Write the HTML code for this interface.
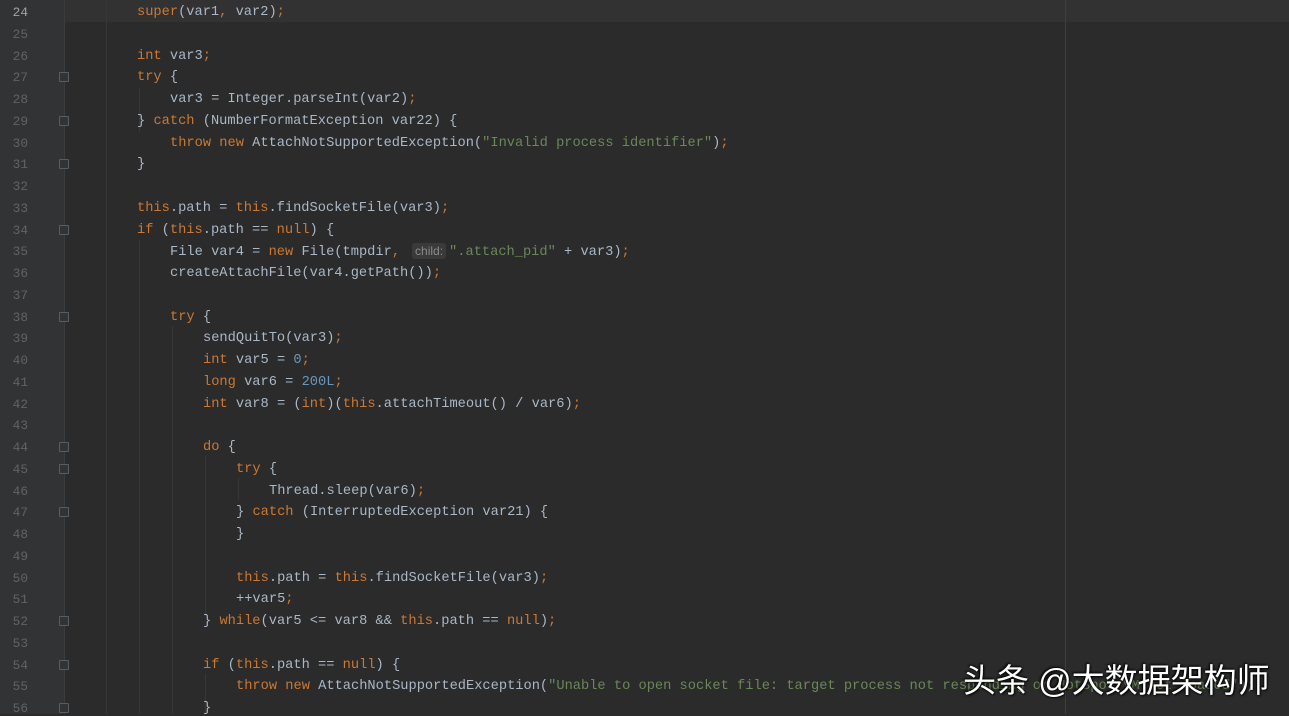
<!DOCTYPE html>
<html><head><meta charset="utf-8"><style>
body{margin:0;width:1289px;height:714px;overflow:hidden;background:#2b2b2b;position:relative;font-family:"Liberation Mono",monospace;font-size:13.7px}
.g{position:absolute;left:0;top:0;width:65px;height:714px;background:#313335}
.gl{position:absolute;left:64px;top:0;width:1px;height:714px;background:#3a3d3f}
.ln{position:absolute;left:0;width:28px;text-align:right;color:#606366;font-size:12.8px;margin-top:2px}
.c{position:absolute;white-space:pre;color:#a9b7c6;margin-top:2px}
.k{color:#cc7832}.s{color:#6a8759}.n{color:#6897bb}
.hl{position:absolute;left:65px;top:0;width:1224px;height:22px;background:#323232}
.ig{position:absolute;width:1px;background:#373737}
.rm{position:absolute;left:1065px;top:0;width:1px;height:714px;background:#3e3e3e}
.f{position:absolute;left:59px;width:8px;height:8px;border:1px solid #5a5d5f;border-radius:1px;background:#313335}
.hint{background:#3a3a3a;color:#8a8a8a;border-radius:3px;font-family:"Liberation Sans",sans-serif;font-size:12px;padding:1px 3px;margin-left:12px;margin-right:3px}
.wm{position:absolute;left:963px;top:654px;color:#fff;font-family:"Liberation Sans","Noto Sans CJK SC",sans-serif;font-size:33px;text-shadow:1px 1px 2px #000,-1px -1px 2px #000}
</style></head><body>
<div class="g"></div><div class="hl"></div><div class="gl"></div>
<div class="ig" style="left:106px;top:0;height:714px"></div>
<div class="ig" style="left:139px;top:88px;height:44px"></div>
<div class="ig" style="left:139px;top:240px;height:474px"></div>
<div class="ig" style="left:172px;top:326px;height:388px"></div>
<div class="ig" style="left:205px;top:456px;height:160px"></div>
<div class="ig" style="left:238px;top:478px;height:22px"></div>
<div class="ig" style="left:205px;top:674px;height:40px"></div>
<div class="rm"></div>
<div class="ln" style="top:3px;color:#a4a3a3">24</div>
<div class="ln" style="top:25px">25</div><div class="ln" style="top:47px">26</div><div class="ln" style="top:68px">27</div><div class="ln" style="top:90px">28</div><div class="ln" style="top:112px">29</div><div class="ln" style="top:134px">30</div><div class="ln" style="top:155px">31</div><div class="ln" style="top:177px">32</div><div class="ln" style="top:199px">33</div><div class="ln" style="top:221px">34</div><div class="ln" style="top:242px">35</div><div class="ln" style="top:264px">36</div><div class="ln" style="top:286px">37</div><div class="ln" style="top:308px">38</div><div class="ln" style="top:329px">39</div><div class="ln" style="top:351px">40</div><div class="ln" style="top:373px">41</div><div class="ln" style="top:395px">42</div><div class="ln" style="top:416px">43</div><div class="ln" style="top:438px">44</div><div class="ln" style="top:460px">45</div><div class="ln" style="top:482px">46</div><div class="ln" style="top:503px">47</div><div class="ln" style="top:525px">48</div><div class="ln" style="top:547px">49</div><div class="ln" style="top:569px">50</div><div class="ln" style="top:590px">51</div><div class="ln" style="top:612px">52</div><div class="ln" style="top:634px">53</div><div class="ln" style="top:656px">54</div><div class="ln" style="top:677px">55</div><div class="ln" style="top:699px">56</div>
<div class="f" style="top:72px"></div><div class="f" style="top:116px"></div><div class="f" style="top:159px"></div><div class="f" style="top:225px"></div><div class="f" style="top:312px"></div><div class="f" style="top:442px"></div><div class="f" style="top:464px"></div><div class="f" style="top:507px"></div><div class="f" style="top:616px"></div><div class="f" style="top:660px"></div><div class="f" style="top:703px"></div>
<div class="c" style="left:137px;top:3px"><span class="k">super</span>(var1<span class="k">,</span> var2)<span class="k">;</span></div>
<div class="c" style="left:137px;top:47px"><span class="k">int</span> var3<span class="k">;</span></div>
<div class="c" style="left:137px;top:68px"><span class="k">try</span> {</div>
<div class="c" style="left:170px;top:90px">var3 = Integer.parseInt(var2)<span class="k">;</span></div>
<div class="c" style="left:137px;top:112px">} <span class="k">catch</span> (NumberFormatException var22) {</div>
<div class="c" style="left:170px;top:134px"><span class="k">throw new</span> AttachNotSupportedException(<span class="s">"Invalid process identifier"</span>)<span class="k">;</span></div>
<div class="c" style="left:137px;top:155px">}</div>
<div class="c" style="left:137px;top:199px"><span class="k">this</span>.path = <span class="k">this</span>.findSocketFile(var3)<span class="k">;</span></div>
<div class="c" style="left:137px;top:221px"><span class="k">if</span> (<span class="k">this</span>.path == <span class="k">null</span>) {</div>
<div class="c" style="left:170px;top:242px">File var4 = <span class="k">new</span> File(tmpdir<span class="k">,</span><span class="hint">child:</span><span class="s">".attach_pid"</span> + var3)<span class="k">;</span></div>
<div class="c" style="left:170px;top:264px">createAttachFile(var4.getPath())<span class="k">;</span></div>
<div class="c" style="left:170px;top:308px"><span class="k">try</span> {</div>
<div class="c" style="left:203px;top:329px">sendQuitTo(var3)<span class="k">;</span></div>
<div class="c" style="left:203px;top:351px"><span class="k">int</span> var5 = <span class="n">0</span><span class="k">;</span></div>
<div class="c" style="left:203px;top:373px"><span class="k">long</span> var6 = <span class="n">200L</span><span class="k">;</span></div>
<div class="c" style="left:203px;top:395px"><span class="k">int</span> var8 = (<span class="k">int</span>)(<span class="k">this</span>.attachTimeout() / var6)<span class="k">;</span></div>
<div class="c" style="left:203px;top:438px"><span class="k">do</span> {</div>
<div class="c" style="left:236px;top:460px"><span class="k">try</span> {</div>
<div class="c" style="left:269px;top:482px">Thread.sleep(var6)<span class="k">;</span></div>
<div class="c" style="left:236px;top:503px">} <span class="k">catch</span> (InterruptedException var21) {</div>
<div class="c" style="left:236px;top:525px">}</div>
<div class="c" style="left:236px;top:569px"><span class="k">this</span>.path = <span class="k">this</span>.findSocketFile(var3)<span class="k">;</span></div>
<div class="c" style="left:236px;top:590px">++var5<span class="k">;</span></div>
<div class="c" style="left:203px;top:612px">} <span class="k">while</span>(var5 &lt;= var8 &amp;&amp; <span class="k">this</span>.path == <span class="k">null</span>)<span class="k">;</span></div>
<div class="c" style="left:203px;top:656px"><span class="k">if</span> (<span class="k">this</span>.path == <span class="k">null</span>) {</div>
<div class="c" style="left:236px;top:677px"><span class="k">throw new</span> AttachNotSupportedException(<span class="s">"Unable to open socket file: target process not responding or HotSpot VM not loaded"</span>)<span class="k">;</span></div>
<div class="c" style="left:203px;top:699px">}</div>
<div class="wm">头条 @大数据架构师</div>
</body></html>
